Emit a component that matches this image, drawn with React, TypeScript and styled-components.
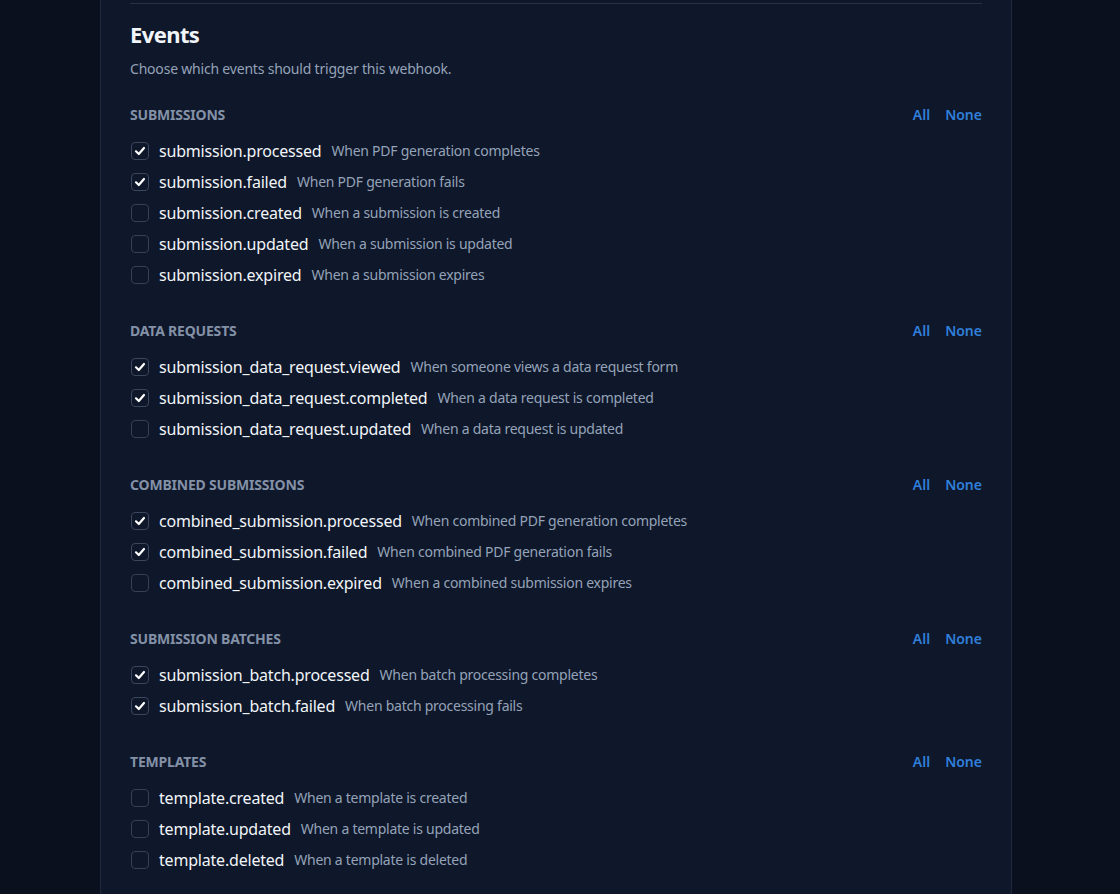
import React from 'react';
import styled, { createGlobalStyle } from 'styled-components';

const GlobalStyle = createGlobalStyle`
  html, body {
    margin: 0;
    padding: 0;
    background: #0a101d;
    font-family: 'Noto Sans', 'Open Sans', sans-serif;
    -webkit-font-smoothing: antialiased;
  }
`;

type EventItem = {
  name: string;
  description: string;
  checked: boolean;
};

type EventGroup = {
  title: string;
  events: EventItem[];
};

const groups: EventGroup[] = [
  {
    title: 'Submissions',
    events: [
      { name: 'submission.processed', description: 'When PDF generation completes', checked: true },
      { name: 'submission.failed', description: 'When PDF generation fails', checked: true },
      { name: 'submission.created', description: 'When a submission is created', checked: false },
      { name: 'submission.updated', description: 'When a submission is updated', checked: false },
      { name: 'submission.expired', description: 'When a submission expires', checked: false },
    ],
  },
  {
    title: 'Data Requests',
    events: [
      { name: 'submission_data_request.viewed', description: 'When someone views a data request form', checked: true },
      { name: 'submission_data_request.completed', description: 'When a data request is completed', checked: true },
      { name: 'submission_data_request.updated', description: 'When a data request is updated', checked: false },
    ],
  },
  {
    title: 'Combined Submissions',
    events: [
      { name: 'combined_submission.processed', description: 'When combined PDF generation completes', checked: true },
      { name: 'combined_submission.failed', description: 'When combined PDF generation fails', checked: true },
      { name: 'combined_submission.expired', description: 'When a combined submission expires', checked: false },
    ],
  },
  {
    title: 'Submission Batches',
    events: [
      { name: 'submission_batch.processed', description: 'When batch processing completes', checked: true },
      { name: 'submission_batch.failed', description: 'When batch processing fails', checked: true },
    ],
  },
  {
    title: 'Templates',
    events: [
      { name: 'template.created', description: 'When a template is created', checked: false },
      { name: 'template.updated', description: 'When a template is updated', checked: false },
      { name: 'template.deleted', description: 'When a template is deleted', checked: false },
    ],
  },
];

const Page = styled.div`
  min-height: 894px;
  padding-left: 100px;
`;

const Card = styled.div`
  width: 912px;
  min-height: 894px;
  box-sizing: border-box;
  padding: 3px 29px 40px;
  background: #0f172a;
  border-left: 1px solid #1e293b;
  border-right: 1px solid #1e293b;
`;

const EventsSection = styled.section`
  border-top: 1px solid #263246;
  padding-top: 16px;
`;

const Title = styled.h2`
  margin: 0;
  font-size: 22px;
  line-height: 28px;
  font-weight: 700;
  letter-spacing: -0.6px;
  color: #f1f5f9;
`;

const Subtitle = styled.p`
  margin: 11px 0 0;
  font-size: 14px;
  line-height: 20px;
  letter-spacing: -0.2px;
  color: #94a3b8;
`;

const Group = styled.div`
  margin-top: 34px;

  &:first-of-type {
    margin-top: 26px;
  }
`;

const GroupHeader = styled.div`
  display: flex;
  align-items: center;
  justify-content: space-between;
  height: 20px;
  margin-bottom: 14px;
`;

const GroupTitle = styled.h3`
  margin: 0;
  font-size: 14px;
  line-height: 20px;
  font-weight: 700;
  letter-spacing: -0.2px;
  text-transform: uppercase;
  color: #8391a7;
`;

const Toggles = styled.div`
  display: flex;
  gap: 15px;
`;

const ToggleLink = styled.button`
  padding: 0;
  border: 0;
  background: none;
  font-family: inherit;
  font-size: 14px;
  line-height: 20px;
  font-weight: 600;
  color: #2f7fdb;
  cursor: pointer;
`;

const EventList = styled.div`
  display: flex;
  flex-direction: column;
  gap: 7px;
`;

const Row = styled.label`
  display: flex;
  align-items: center;
  height: 24px;
  cursor: pointer;
`;

const Box = styled.span<{ $checked: boolean }>`
  display: flex;
  align-items: center;
  justify-content: center;
  width: 18px;
  height: 18px;
  box-sizing: border-box;
  margin-left: 1px;
  border: 1.5px solid ${(p) => (p.$checked ? '#3a475c' : '#354157')};
  border-radius: 4px;
  background: #0f172a;
`;

const EventName = styled.span`
  margin-left: 10px;
  font-size: 16px;
  line-height: 24px;
  letter-spacing: -0.2px;
  color: #f1f5f9;
`;

const EventDescription = styled.span`
  margin-left: 10px;
  font-size: 14px;
  line-height: 20px;
  letter-spacing: -0.25px;
  color: #94a3b8;
`;

const Check = () => (
  <svg width="12" height="12" viewBox="0 0 12 12" fill="none">
    <path d="M2 6.3L4.8 9L10 3" stroke="#ffffff" strokeWidth="2.2" strokeLinecap="round" strokeLinejoin="round" />
  </svg>
);

const App = () => (
  <>
    <GlobalStyle />
    <Page>
      <Card>
        <EventsSection>
          <Title>Events</Title>
          <Subtitle>Choose which events should trigger this webhook.</Subtitle>
          {groups.map((group) => (
            <Group key={group.title}>
              <GroupHeader>
                <GroupTitle>{group.title}</GroupTitle>
                <Toggles>
                  <ToggleLink type="button">All</ToggleLink>
                  <ToggleLink type="button">None</ToggleLink>
                </Toggles>
              </GroupHeader>
              <EventList>
                {group.events.map((event) => (
                  <Row key={event.name}>
                    <Box $checked={event.checked}>{event.checked && <Check />}</Box>
                    <EventName>{event.name}</EventName>
                    <EventDescription>{event.description}</EventDescription>
                  </Row>
                ))}
              </EventList>
            </Group>
          ))}
        </EventsSection>
      </Card>
    </Page>
  </>
);

export default App;
